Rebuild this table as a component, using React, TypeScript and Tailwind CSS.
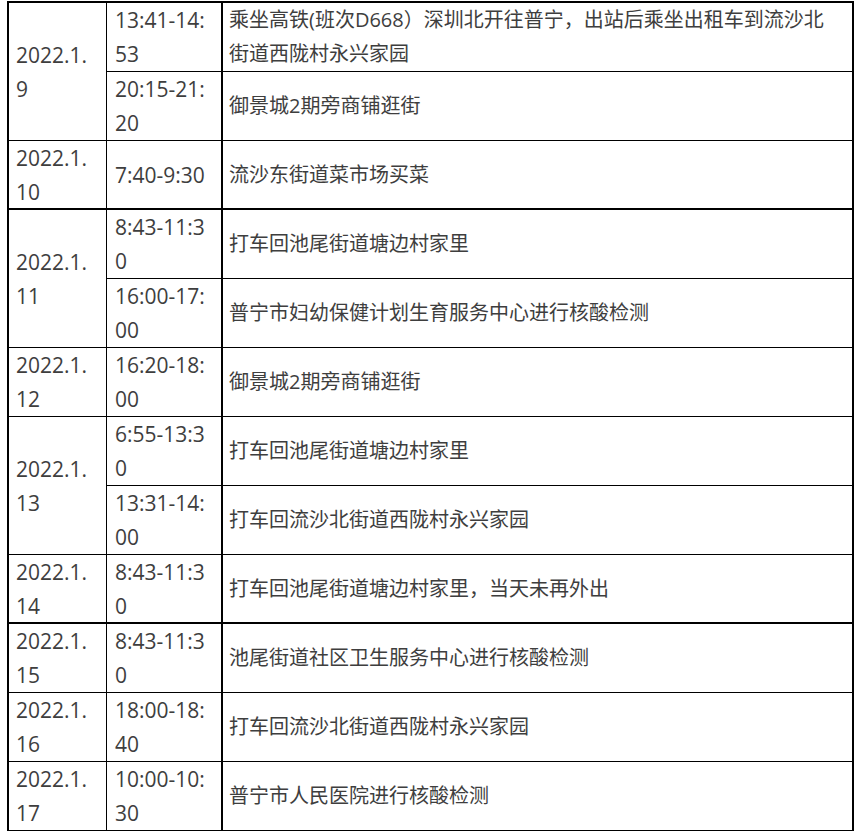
type Visit = { time: string; place: string };
type Day = { date: string; visits: Visit[]; thick?: boolean };

const days: Day[] = [
  {
    date: "2022.1.9",
    visits: [
      {
        time: "13:41-14:53",
        place: "乘坐高铁(班次D668）深圳北开往普宁，出站后乘坐出租车到流沙北街道西陇村永兴家园",
      },
      { time: "20:15-21:20", place: "御景城2期旁商铺逛街" },
    ],
  },
  {
    date: "2022.1.10",
    visits: [{ time: "7:40-9:30", place: "流沙东街道菜市场买菜" }],
    thick: true,
  },
  {
    date: "2022.1.11",
    visits: [
      { time: "8:43-11:30", place: "打车回池尾街道塘边村家里" },
      { time: "16:00-17:00", place: "普宁市妇幼保健计划生育服务中心进行核酸检测" },
    ],
  },
  {
    date: "2022.1.12",
    visits: [{ time: "16:20-18:00", place: "御景城2期旁商铺逛街" }],
  },
  {
    date: "2022.1.13",
    visits: [
      { time: "6:55-13:30", place: "打车回池尾街道塘边村家里" },
      { time: "13:31-14:00", place: "打车回流沙北街道西陇村永兴家园" },
    ],
  },
  {
    date: "2022.1.14",
    visits: [{ time: "8:43-11:30", place: "打车回池尾街道塘边村家里，当天未再外出" }],
    thick: true,
  },
  {
    date: "2022.1.15",
    visits: [{ time: "8:43-11:30", place: "池尾街道社区卫生服务中心进行核酸检测" }],
  },
  {
    date: "2022.1.16",
    visits: [{ time: "18:00-18:40", place: "打车回流沙北街道西陇村永兴家园" }],
  },
  {
    date: "2022.1.17",
    visits: [{ time: "10:00-10:30", place: "普宁市人民医院进行核酸检测" }],
  },
];

export default function App() {
  return (
    <div className="min-h-screen bg-white">
      <div
        className="ml-[7px] mt-px grid w-[847px] grid-cols-[98px_116px_631px] auto-rows-[69px] border-l-2 border-t-2 border-black text-[#3e3e3e]"
        style={{ fontFamily: '"Open Sans", "Noto Sans CJK SC", sans-serif' }}
      >
        {days.map((day) =>
          [
            <div
              key={day.date}
              className={`col-start-1 flex items-center break-all border-r border-black pl-[7px] pr-[10px] text-[21px] leading-[34px] ${
                day.visits.length === 2 ? "row-span-2" : ""
              } ${day.thick ? "border-b-2" : "border-b"}`}
            >
              {day.date}
            </div>,
            ...day.visits.flatMap((v, i) => {
              const last = i === day.visits.length - 1;
              const bottom = last && day.thick ? "border-b-2" : "border-b";
              return [
                <div
                  key={day.date + v.time}
                  className={`col-start-2 flex items-center break-all border-r-2 border-black pl-[8px] pr-[10px] text-[21px] leading-[34px] ${bottom}`}
                >
                  {v.time}
                </div>,
                <div
                  key={day.date + v.time + "p"}
                  className={`col-start-3 flex items-center break-all border-r-2 border-black pl-[6px] pr-[10px] text-[20px] leading-[34px] ${bottom}`}
                >
                  {v.place}
                </div>,
              ];
            }),
          ]
        )}
      </div>
    </div>
  );
}
